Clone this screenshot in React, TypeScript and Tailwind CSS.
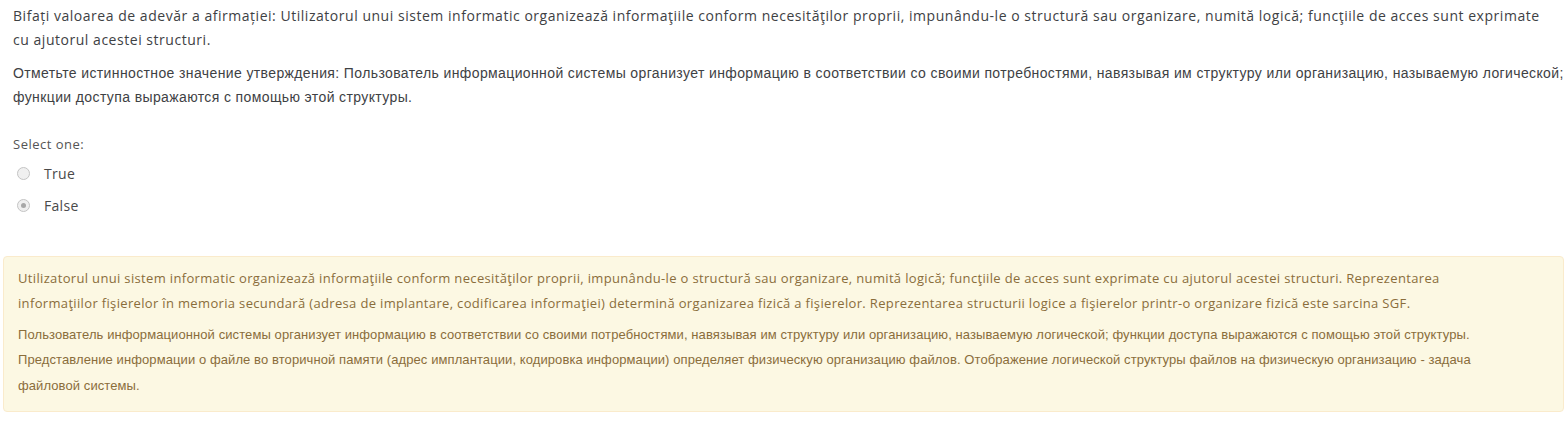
import React from "react";

const latin = "font-['Open_Sans',sans-serif]";
const cyr = "font-['Liberation_Sans',Arial,sans-serif]";

interface OptionProps {
  label: string;
  checked?: boolean;
}

const Option = ({ label, checked }: OptionProps) => {
  return (
    <div className="flex items-center h-[32px] pl-[17px]">
      <span className="flex items-center justify-center w-[13px] h-[13px] rounded-full border border-[#c4c4c4] bg-[#f0f0f0]">
        {checked && <span className="w-[5px] h-[5px] rounded-full bg-[#a8a8a8]" />}
      </span>
      <span className={`ml-[14px] text-[14px] tracking-[0.3px] text-[#4a4a4a] ${latin}`}>{label}</span>
    </div>
  );
};

export default function App() {
  return (
    <div className="w-[1567px] h-[422px] bg-white overflow-hidden">
      <div className="pl-[13px] pt-[4px]">
        <p className={`whitespace-nowrap text-[14px] leading-[24px] text-[#3e4144] tracking-[0.53px] ${latin}`}>
          Bifați valoarea de adevăr a afirmației: Utilizatorul unui sistem informatic organizează
          informaţiile conform necesităţilor proprii, impunându-le o structură sau organizare, numită
          logică; funcţiile de acces sunt exprimate
          <br />
          cu ajutorul acestei structuri.
        </p>
        <p className={`mt-[9px] whitespace-nowrap text-[14px] leading-[24px] text-[#3e4144] tracking-[0.38px] ${cyr}`}>
          Отметьте истинностное значение утверждения: Пользователь информационной системы организует
          информацию в соответствии со своими потребностями, навязывая им структуру или организацию,
          называемую логической;
          <br />
          функции доступа выражаются с помощью этой структуры.
        </p>
      </div>

      <div className="mt-[26px]">
        <div className={`pl-[13px] text-[13px] tracking-[0.5px] text-[#555] ${latin}`}>Select one:</div>
        <div className="mt-[3px]">
          <Option label="True" />
          <Option label="False" checked />
        </div>
      </div>

      <div className="mx-[3px] mt-[34px] h-[156px] rounded-[4px] border border-[#faebcc] bg-[#fcf8e3] px-[14px] pt-[9px] text-[#8a6d3b]">
        <p className={`whitespace-nowrap text-[13px] leading-[25px] tracking-[0.34px] ${latin}`}>
          Utilizatorul unui sistem informatic organizează informaţiile conform necesităţilor proprii,
          impunându-le o structură sau organizare, numită logică; funcţiile de acces sunt exprimate cu
          ajutorul acestei structuri. Reprezentarea
          <br />
          informaţiilor fişierelor în memoria secundară (adresa de implantare, codificarea informaţiei)
          determină organizarea fizică a fişierelor. Reprezentarea structurii logice a fişierelor
          printr-o organizare fizică este sarcina SGF.
        </p>
        <p className={`mt-[6px] whitespace-nowrap text-[13px] leading-[25.5px] tracking-[0.09px] ${cyr}`}>
          Пользователь информационной системы организует информацию в соответствии со своими
          потребностями, навязывая им структуру или организацию, называемую логической; функции доступа
          выражаются с помощью этой структуры.
          <br />
          Представление информации о файле во вторичной памяти (адрес имплантации, кодировка информации)
          определяет физическую организацию файлов. Отображение логической структуры файлов на
          физическую организацию - задача
          <br />
          файловой системы.
        </p>
      </div>
    </div>
  );
}
